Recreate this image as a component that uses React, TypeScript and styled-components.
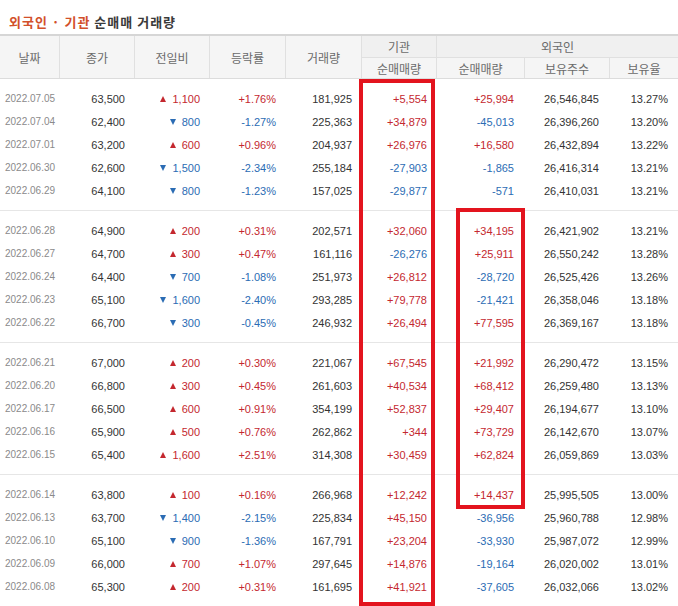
import React from "react";
import styled, { createGlobalStyle } from "styled-components";

const Global = createGlobalStyle`
  html, body { margin: 0; padding: 0; background: #fff; }
  body { font-family: "Liberation Sans", Arial, sans-serif; }
`;

const COLS = "59px 75px 75px 76px 76px 75px 88px 85px 69px";

const Page = styled.div`
  position: relative;
  width: 678px;
  height: 606px;
  overflow: hidden;
  background: #fff;
`;

const Title = styled.h2`
  margin: 0 0 3px 0;
  padding: 13px 0 0 9px;
  height: 18px;
  line-height: 18px;
  font-family: "Noto Sans CJK KR", sans-serif;
  font-size: 13px;
  font-weight: 700;
  color: #3a3a3a;
  letter-spacing: 1px;
`;

const Accent = styled.span`
  color: #d2502a;
`;

const Header = styled.div`
  display: grid;
  grid-template-columns: ${COLS};
  grid-template-rows: 21px 21px;
  background: #f5f5f5;
  border-top: 2px solid #d6d6d6;
  border-bottom: 1px solid #dcdcdc;
`;

const HeadCell = styled.div<{ $span2?: boolean; $first?: boolean; $sub?: boolean; $cols?: string; $group?: boolean }>`
  display: flex;
  align-items: center;
  justify-content: center;
  font-family: "Noto Sans CJK KR", sans-serif;
  font-size: 12px;
  color: #6a6a6a;
  box-sizing: border-box;
  border-left: ${(p) => (p.$first ? "none" : "1px solid #e0e0e0")};
  border-top: ${(p) => (p.$sub ? "1px solid #e0e0e0" : "none")};
  grid-row: ${(p) => (p.$span2 ? "span 2" : "auto")};
  grid-column: ${(p) => p.$cols || "auto"};
  background: ${(p) => (p.$group ? "#f0f0f0" : "transparent")};
`;

const Group = styled.div<{ $last?: boolean }>`
  padding: 8px 0;
  border-bottom: ${(p) => (p.$last ? "none" : "1px solid #e6e6e6")};
`;

const Row = styled.div`
  display: grid;
  grid-template-columns: ${COLS};
  height: 23px;
  align-items: center;
`;

type Tone = "up" | "down" | "plain";

const toneColor = (t: Tone) => (t === "up" ? "#c4282f" : t === "down" ? "#2b6cb4" : "#333");

const DateCell = styled.div`
  padding-left: 5px;
  font-size: 10px;
  color: #8a8a8a;
  white-space: nowrap;
`;

const Num = styled.div<{ $tone?: Tone; $pr?: number }>`
  text-align: right;
  padding-right: ${(p) => p.$pr ?? 9}px;
  font-size: 11px;
  color: ${(p) => toneColor(p.$tone || "plain")};
  white-space: nowrap;
  display: flex;
  justify-content: flex-end;
  align-items: center;
`;

const Tri = styled.span<{ $up: boolean }>`
  display: inline-block;
  width: 0;
  height: 0;
  margin-right: 6px;
  border-left: 3.5px solid transparent;
  border-right: 3.5px solid transparent;
  border-bottom: ${(p) => (p.$up ? "6px solid #c4282f" : "none")};
  border-top: ${(p) => (p.$up ? "none" : "6px solid #2b6cb4")};
`;

const Box = styled.div`
  position: absolute;
  box-sizing: border-box;
  border: 4px solid #e3141e;
  pointer-events: none;
`;

type Rec = string[];

const groups: Rec[][] = [
  [
    ["2022.07.05", "63,500", "+1,100", "+1.76%", "181,925", "+5,554", "+25,994", "26,546,845"],
    ["2022.07.04", "62,400", "-800", "-1.27%", "225,363", "+34,879", "-45,013", "26,396,260"],
    ["2022.07.01", "63,200", "+600", "+0.96%", "204,937", "+26,976", "+16,580", "26,432,894"],
    ["2022.06.30", "62,600", "-1,500", "-2.34%", "255,184", "-27,903", "-1,865", "26,416,314"],
    ["2022.06.29", "64,100", "-800", "-1.23%", "157,025", "-29,877", "-571", "26,410,031"],
  ],
  [
    ["2022.06.28", "64,900", "+200", "+0.31%", "202,571", "+32,060", "+34,195", "26,421,902"],
    ["2022.06.27", "64,700", "+300", "+0.47%", "161,116", "-26,276", "+25,911", "26,550,242"],
    ["2022.06.24", "64,400", "-700", "-1.08%", "251,973", "+26,812", "-28,720", "26,525,426"],
    ["2022.06.23", "65,100", "-1,600", "-2.40%", "293,285", "+79,778", "-21,421", "26,358,046"],
    ["2022.06.22", "66,700", "-300", "-0.45%", "246,932", "+26,494", "+77,595", "26,369,167"],
  ],
  [
    ["2022.06.21", "67,000", "+200", "+0.30%", "221,067", "+67,545", "+21,992", "26,290,472"],
    ["2022.06.20", "66,800", "+300", "+0.45%", "261,603", "+40,534", "+68,412", "26,259,480"],
    ["2022.06.17", "66,500", "+600", "+0.91%", "354,199", "+52,837", "+29,407", "26,194,677"],
    ["2022.06.16", "65,900", "+500", "+0.76%", "262,862", "+344", "+73,729", "26,142,670"],
    ["2022.06.15", "65,400", "+1,600", "+2.51%", "314,308", "+30,459", "+62,824", "26,059,869"],
  ],
  [
    ["2022.06.14", "63,800", "+100", "+0.16%", "266,968", "+12,242", "+14,437", "25,995,505"],
    ["2022.06.13", "63,700", "-1,400", "-2.15%", "225,834", "+45,150", "-36,956", "25,960,788"],
    ["2022.06.10", "65,100", "-900", "-1.36%", "167,791", "+23,204", "-33,930", "25,987,072"],
    ["2022.06.09", "66,000", "+700", "+1.07%", "297,645", "+14,876", "-19,164", "26,020,002"],
    ["2022.06.08", "65,300", "+200", "+0.31%", "161,695", "+41,921", "-37,605", "26,032,066"],
  ],
];

const ratios = [
  ["13.27%", "13.20%", "13.22%", "13.21%", "13.21%"],
  ["13.21%", "13.28%", "13.26%", "13.18%", "13.18%"],
  ["13.15%", "13.13%", "13.10%", "13.07%", "13.03%"],
  ["13.00%", "12.98%", "12.99%", "13.01%", "13.02%"],
];

const tone = (v: string): Tone => (v.startsWith("+") ? "up" : v.startsWith("-") ? "down" : "plain");

export default function App() {
  return (
    <>
      <Global />
      <Page>
        <Title>
          <Accent>외국인 · 기관</Accent> 순매매 거래량
        </Title>
        <Header>
          <HeadCell $span2 $first>날짜</HeadCell>
          <HeadCell $span2>종가</HeadCell>
          <HeadCell $span2>전일비</HeadCell>
          <HeadCell $span2>등락률</HeadCell>
          <HeadCell $span2>거래량</HeadCell>
          <HeadCell $group>기관</HeadCell>
          <HeadCell $group $cols="span 3">외국인</HeadCell>
          <HeadCell $sub>순매매량</HeadCell>
          <HeadCell $sub>순매매량</HeadCell>
          <HeadCell $sub>보유주수</HeadCell>
          <HeadCell $sub>보유율</HeadCell>
        </Header>
        {groups.map((g, gi) => (
          <Group key={gi} $last={gi === groups.length - 1}>
            {g.map((r, ri) => {
              const diff = r[2];
              const up = diff.startsWith("+");
              return (
                <Row key={ri}>
                  <DateCell>{r[0]}</DateCell>
                  <Num>{r[1]}</Num>
                  <Num $tone={up ? "up" : "down"}>
                    <Tri $up={up} />
                    {diff.slice(1)}
                  </Num>
                  <Num $tone={tone(r[3])}>{r[3]}</Num>
                  <Num>{r[4]}</Num>
                  <Num $tone={tone(r[5])}>{r[5]}</Num>
                  <Num $tone={tone(r[6])} $pr={10}>{r[6]}</Num>
                  <Num $pr={10}>{r[7]}</Num>
                  <Num $pr={10}>{ratios[gi][ri]}</Num>
                </Row>
              );
            })}
          </Group>
        ))}
        <Box style={{ left: 359, top: 79, width: 76, height: 527 }} />
        <Box style={{ left: 456, top: 208, width: 69, height: 301 }} />
      </Page>
    </>
  );
}
